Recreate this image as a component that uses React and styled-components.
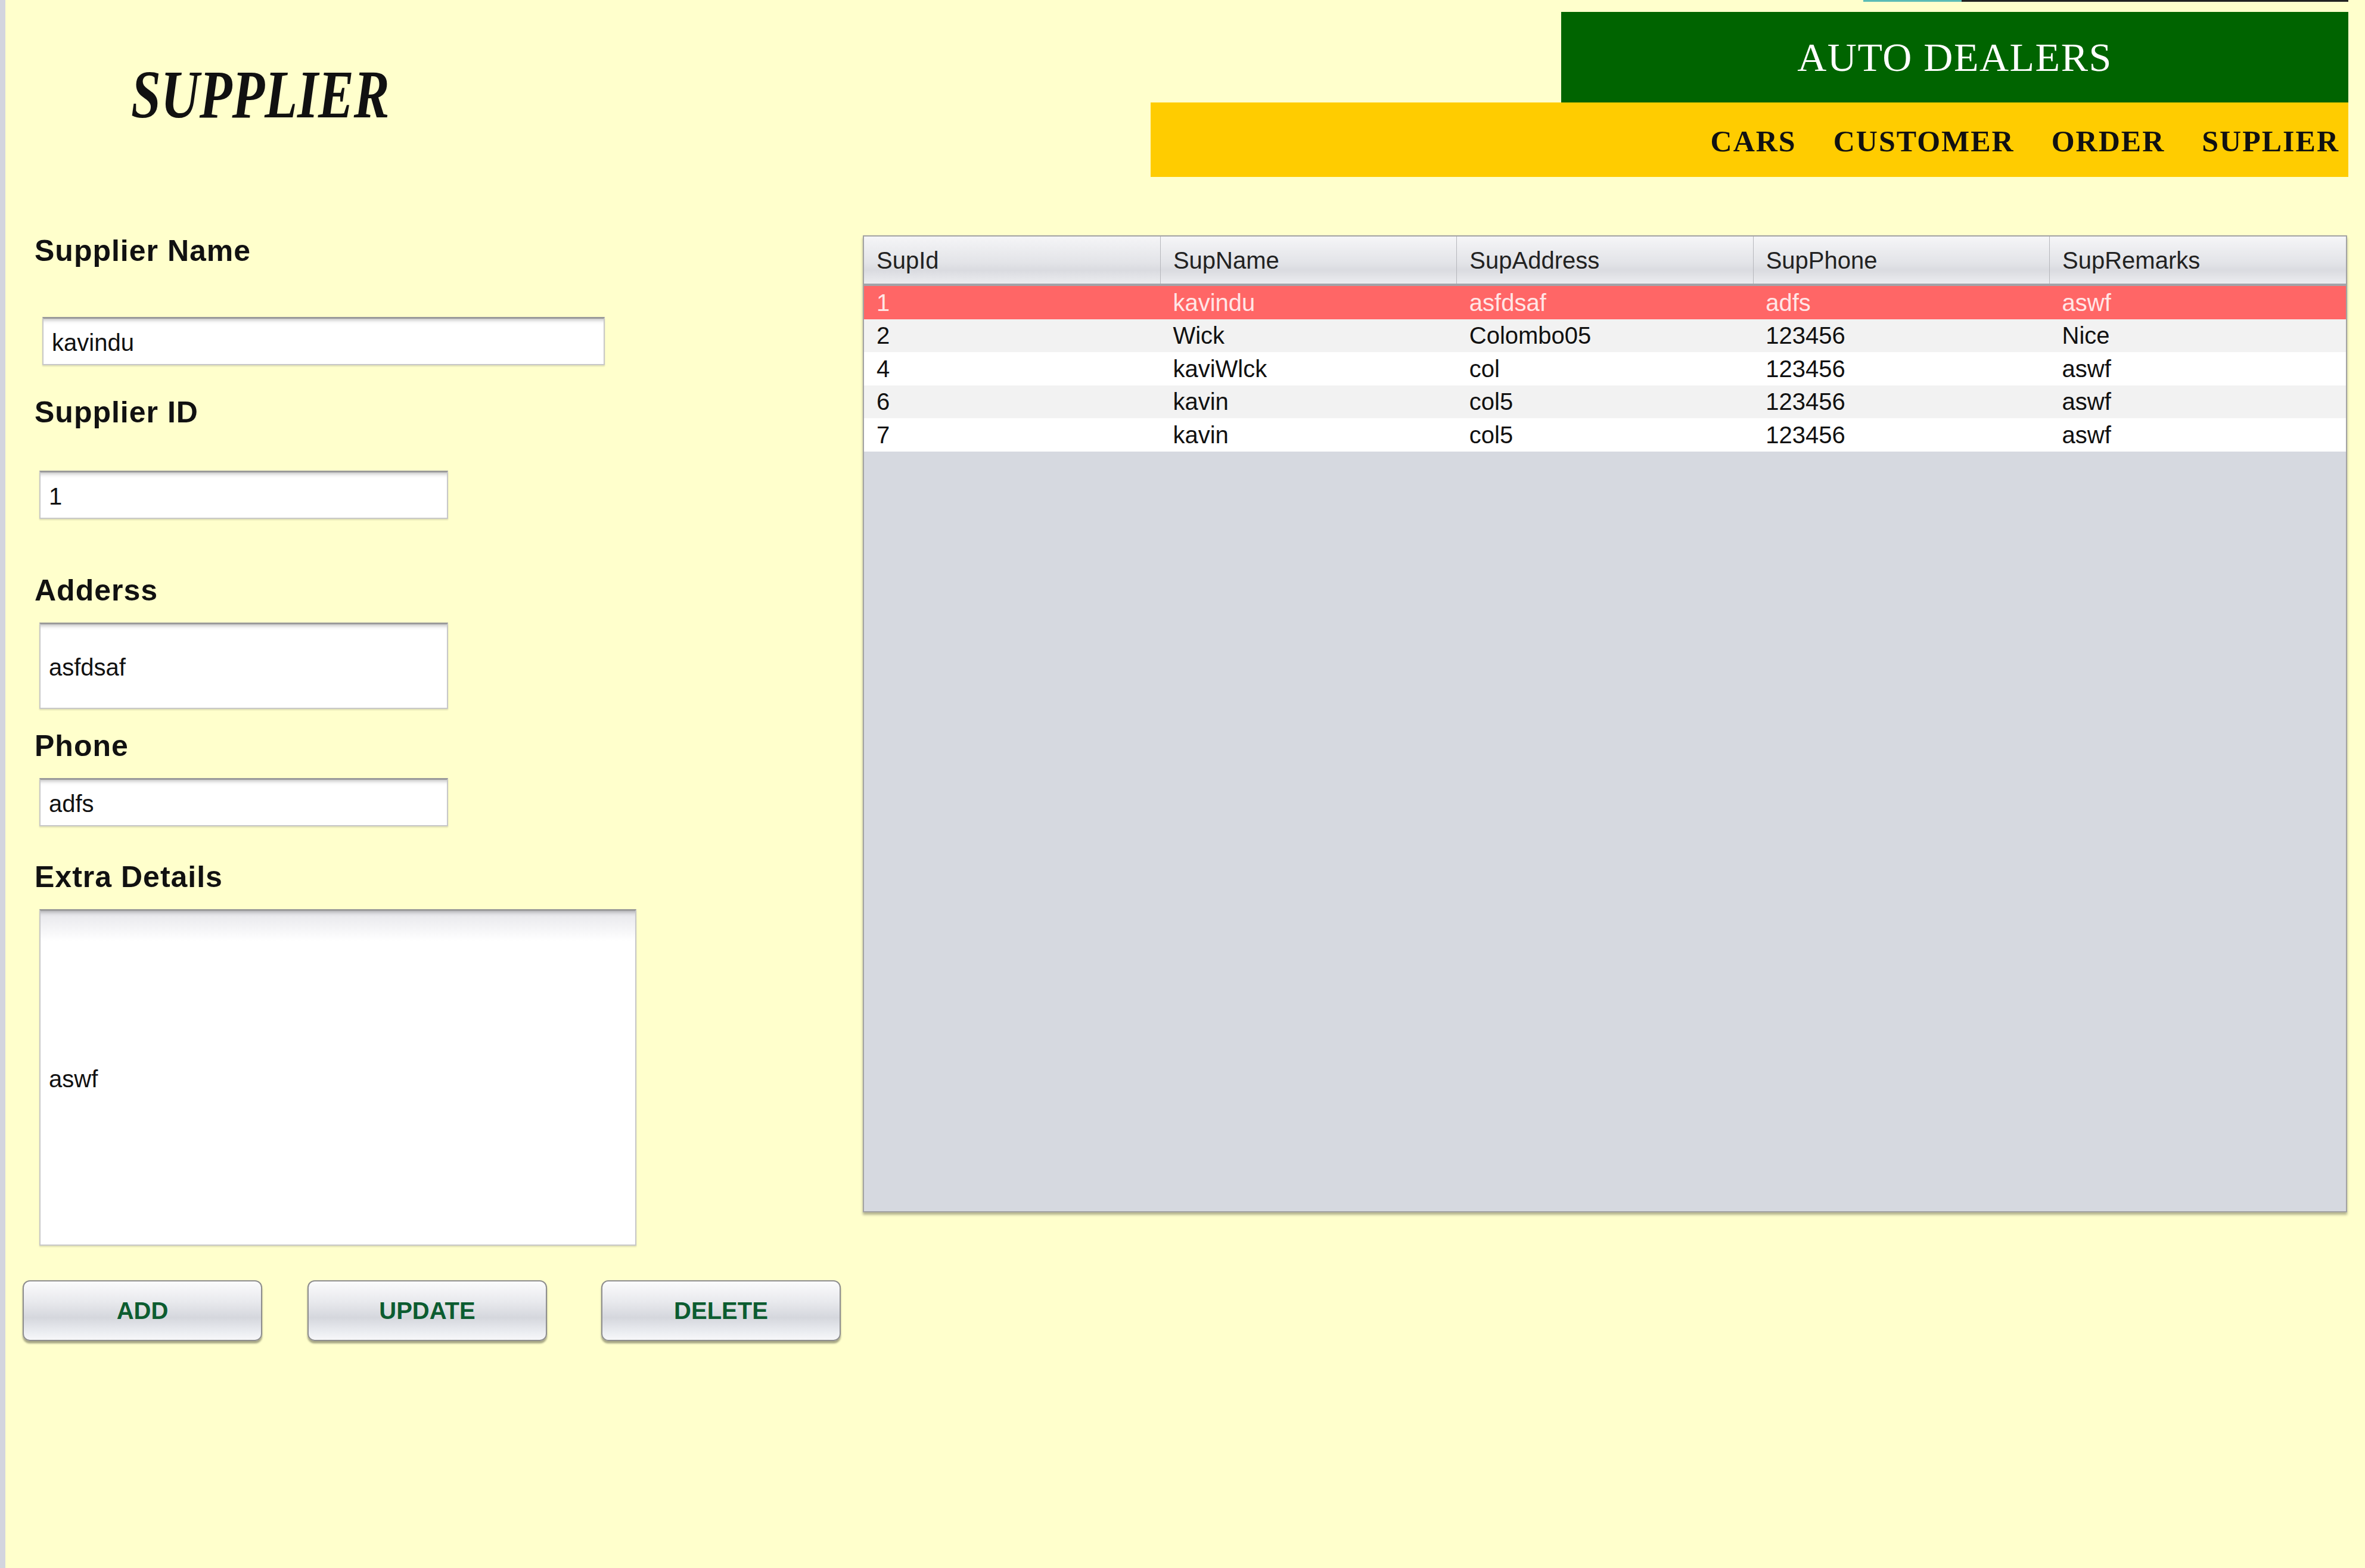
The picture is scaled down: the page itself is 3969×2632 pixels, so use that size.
import React from 'react'
import styled, { createGlobalStyle } from 'styled-components'

const GlobalStyle = createGlobalStyle`
	html, body {
		margin: 0;
		padding: 0;
		background: #ffffcc;
	}
	body {
		font-family: 'Liberation Sans', Arial, sans-serif;
	}
`

const Page = styled.div`
	width: 3969px;
	height: 2632px;
	box-sizing: border-box;
	border-left: 9px solid #d3d5de;
	background: #ffffcc;
	display: flex;
	flex-direction: column;
	overflow: hidden;
`

const TopBar = styled.div`
	display: flex;
	justify-content: space-between;
	align-items: flex-start;
	height: 297px;
	padding-right: 28px;
`

const Title = styled.h1`
	margin: 101px 0 0 211px;
	font-family: 'Liberation Serif', 'Times New Roman', serif;
	font-style: italic;
	font-weight: 700;
	font-size: 115px;
	line-height: 1;
	color: #111;
	transform: scaleX(0.78);
	transform-origin: left center;
`

const HeaderBlock = styled.div`
	width: 2010px;
	display: flex;
	flex-direction: column;
	align-items: flex-end;
`

const AccentLine = styled.div`
	width: 814px;
	height: 3px;
	margin-bottom: 17px;
	background: linear-gradient(90deg, #5bbcb6 0 165px, #222 165px);
`

const Banner = styled.div`
	width: 1321px;
	height: 152px;
	background: #006400;
	display: flex;
	align-items: center;
	justify-content: center;
	color: #fff;
	font-family: 'Liberation Serif', 'Times New Roman', serif;
	font-size: 68px;
	letter-spacing: 1.5px;
`

const NavBar = styled.nav`
	align-self: stretch;
	height: 125px;
	box-sizing: border-box;
	padding: 4px 15px 0 0;
	background: #ffcc00;
	display: flex;
	justify-content: flex-end;
	align-items: center;
	gap: 62px;
`

const NavLink = styled.a`
	font-family: 'Liberation Serif', 'Times New Roman', serif;
	font-weight: 700;
	font-size: 50px;
	letter-spacing: 2px;
	color: #111;
	text-decoration: none;
`

const Main = styled.div`
	display: flex;
	flex: 1;
`

const FormColumn = styled.div`
	width: 1439px;
	flex-shrink: 0;
	display: flex;
	flex-direction: column;
	align-items: flex-start;
	padding-top: 95px;
`

const FieldLabel = styled.div`
	margin: 0 0 ${(p) => p.$space}px 49px;
	height: 58px;
	line-height: 58px;
	font-weight: 700;
	font-size: 50px;
	letter-spacing: 1px;
	color: #111;
`

const FieldBox = styled.div`
	box-sizing: border-box;
	width: ${(p) => p.$w}px;
	height: ${(p) => p.$h}px;
	margin: 0 0 ${(p) => p.$space}px ${(p) => p.$x}px;
	padding: 4px 0 0 14px;
	display: flex;
	align-items: center;
	background: ${(p) =>
		p.$tall ? 'linear-gradient(#e6e6ea, #ffffff 50px)' : '#ffffff'};
	border: 2px solid #c8c8c8;
	border-top: 3px solid #9a9a9a;
	box-shadow: inset 0 8px 7px -6px rgba(0, 0, 0, 0.28),
		0 2px 2px rgba(0, 0, 0, 0.12);
	font-size: 40px;
	color: #111;
`

const ButtonRow = styled.div`
	display: flex;
	align-items: center;
	gap: 76px;
	margin-left: 29px;
`

const ActionButton = styled.button`
	box-sizing: border-box;
	width: 402px;
	height: 102px;
	margin-left: ${(p) => p.$shift || 0}px;
	border: 2px solid #8e8e8e;
	border-radius: 12px;
	background: linear-gradient(
		#fbfbfc 0%,
		#e8e9ed 35%,
		#d5d7dd 62%,
		#eceef2 88%,
		#f7f7f9 100%
	);
	box-shadow: 0 4px 3px rgba(0, 0, 0, 0.35);
	font-family: 'Liberation Sans', Arial, sans-serif;
	font-weight: 700;
	font-size: 40px;
	color: #0c5c30;
	cursor: pointer;
`

const TableBox = styled.div`
	margin-top: 98px;
	width: 2491px;
	height: 1640px;
	box-sizing: border-box;
	border: 2px solid #a3a3a3;
	background: #d6d9e0;
	box-shadow: 0 4px 4px rgba(0, 0, 0, 0.3);
	overflow: hidden;
`

const Table = styled.table`
	width: 100%;
	border-collapse: collapse;
	table-layout: fixed;
`

const HeadCell = styled.th`
	height: 77px;
	padding: 2px 0 0 21px;
	text-align: left;
	font-weight: 400;
	font-size: 40px;
	color: #222;
	background: linear-gradient(#f5f5f7, #e3e4e8 55%, #dadbe0 72%, #ecedf0);
	border-right: 1px solid #b6b7bc;
	border-bottom: 4px solid #a2a4a9;
	&:last-child {
		border-right: none;
	}
`

const Row = styled.tr`
	background: ${(p) => (p.$selected ? '#ff6666' : p.$odd ? '#f2f2f2' : '#ffffff')};
	color: ${(p) => (p.$selected ? '#ffe6e6' : '#111')};
`

const Cell = styled.td`
	height: 55.5px;
	padding: 0 0 0 21px;
	font-size: 40px;
	line-height: 1;
	white-space: nowrap;
	overflow: hidden;
`

const columns = ['SupId', 'SupName', 'SupAddress', 'SupPhone', 'SupRemarks']

const suppliers = [
	['1', 'kavindu', 'asfdsaf', 'adfs', 'aswf'],
	['2', 'Wick', 'Colombo05', '123456', 'Nice'],
	['4', 'kaviWlck', 'col', '123456', 'aswf'],
	['6', 'kavin', 'col5', '123456', 'aswf'],
	['7', 'kavin', 'col5', '123456', 'aswf'],
]

function App() {
	return (
		<>
			<GlobalStyle />
			<Page>
				<TopBar>
					<Title>SUPPLIER</Title>
					<HeaderBlock>
						<AccentLine />
						<Banner>AUTO DEALERS</Banner>
						<NavBar>
							<NavLink>CARS</NavLink>
							<NavLink>CUSTOMER</NavLink>
							<NavLink>ORDER</NavLink>
							<NavLink>SUPLIER</NavLink>
						</NavBar>
					</HeaderBlock>
				</TopBar>
				<Main>
					<FormColumn>
						<FieldLabel $space={82}>Supplier Name</FieldLabel>
						<FieldBox $w={944} $h={81} $x={62} $space={50}>
							kavindu
						</FieldBox>
						<FieldLabel $space={69}>Supplier ID</FieldLabel>
						<FieldBox $w={686} $h={81} $x={57} $space={91}>
							1
						</FieldBox>
						<FieldLabel $space={25}>Adderss</FieldLabel>
						<FieldBox $w={686} $h={145} $x={57} $space={33}>
							asfdsaf
						</FieldBox>
						<FieldLabel $space={25}>Phone</FieldLabel>
						<FieldBox $w={686} $h={81} $x={57} $space={56}>
							adfs
						</FieldBox>
						<FieldLabel $space={25}>Extra Details</FieldLabel>
						<FieldBox $w={1002} $h={565} $x={57} $space={58} $tall>
							aswf
						</FieldBox>
						<ButtonRow>
							<ActionButton>ADD</ActionButton>
							<ActionButton>UPDATE</ActionButton>
							<ActionButton $shift={15}>DELETE</ActionButton>
						</ButtonRow>
					</FormColumn>
					<TableBox>
						<Table>
							<thead>
								<tr>
									{columns.map((c) => (
										<HeadCell key={c}>{c}</HeadCell>
									))}
								</tr>
							</thead>
							<tbody>
								{suppliers.map((row, i) => (
									<Row key={row[0]} $selected={i === 0} $odd={i % 2 === 1}>
										{row.map((v, j) => (
											<Cell key={j}>{v}</Cell>
										))}
									</Row>
								))}
							</tbody>
						</Table>
					</TableBox>
				</Main>
			</Page>
		</>
	)
}

export default App
